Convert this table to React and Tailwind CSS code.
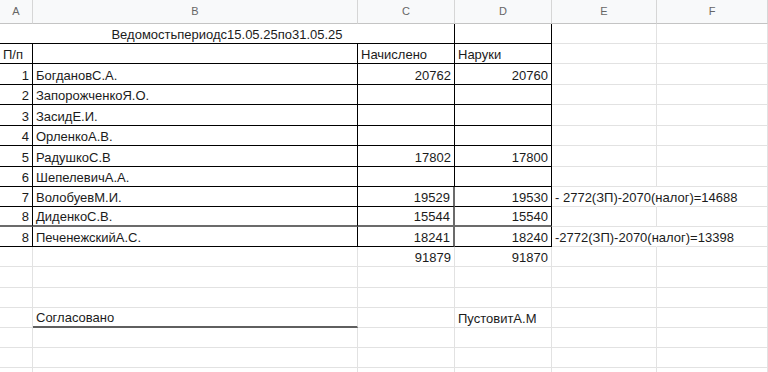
import React from "react";

const LIGHT = "light";
const DARK = "dark";
const GRAY = "gray";
const NONE = "none";

// right / bottom border classes, written out in full
const rightCls = {
  light: "border-r border-r-[#e2e2e2]",
  dark: "border-r border-r-black",
  gray: "border-r-2 border-r-[#6b6b6b]",
  none: "border-r border-r-transparent",
};
const bottomCls = {
  light: "border-b border-b-[#e2e2e2]",
  dark: "border-b border-b-black",
  gray: "border-b-2 border-b-[#6b6b6b]",
  soft: "border-b-2 border-b-[#5f5f5f]",
};

const alignCls = {
  l: "justify-start pl-[3px]",
  r: "justify-end pr-[3px]",
  c: "justify-center",
};

function Cell({ t = "", a = "l", r = LIGHT, b = LIGHT, span }) {
  return (
    <div
      className={[
        "flex items-end whitespace-nowrap leading-4 text-[13px] text-[#1b1b1b]",
        alignCls[a],
        rightCls[r],
        bottomCls[b],
        span === 3 ? "col-span-3" : "",
      ].join(" ")}
    >
      {t}
    </div>
  );
}

const people = [
  { n: "1", name: "БогдановС.А.", c: "20762", d: "20760" },
  { n: "2", name: "ЗапорожченкоЯ.О." },
  { n: "3", name: "ЗасидЕ.И." },
  { n: "4", name: "ОрленкоА.В." },
  { n: "5", name: "РадушкоС.В", c: "17802", d: "17800" },
  { n: "6", name: "ШепелевичА.А." },
  { n: "7", name: "ВолобуевМ.И.", c: "19529", d: "19530", note: "- 2772(ЗП)-2070(налог)=14688" },
  { n: "8", name: "ДиденкоС.В.", c: "15544", d: "15540" },
  { n: "8", name: "ПеченежскийА.С.", c: "18241", d: "18240", note: "-2772(ЗП)-2070(налог)=13398" },
];

export default function App() {
  const letters = ["A", "B", "C", "D", "E", "F"];

  return (
    <div
      className="h-[372px] w-[768px] overflow-hidden bg-white"
      style={{ fontFamily: '"Liberation Sans", Arial, sans-serif' }}
    >
      <div className="grid grid-cols-[33px_325px_97px_97px_105px_111px] grid-rows-[24px_20px_20px_21px_20px_21px_20px_21px_20px_20px_20px_20px_20px_21px_20px_20px_20px_20px_20px]">
        {/* column headers */}
        {letters.map((l) => (
          <div
            key={l}
            className="flex items-center justify-center border-b border-r border-b-[#c4c4c4] border-r-[#d6d6d6] bg-[#f8f9fa] text-[11px] text-[#666]"
          >
            {l}
          </div>
        ))}

        {/* title row */}
        <Cell span={3} t="Ведомостьпериодс15.05.25по31.05.25" a="c" r={DARK} b={DARK} />
        <Cell r={DARK} b={DARK} />
        <Cell />
        <Cell />

        {/* column captions */}
        <Cell t="П/п" r={DARK} b={DARK} />
        <Cell r={DARK} b={DARK} />
        <Cell t="Начислено" r={DARK} b={DARK} />
        <Cell t="Наруки" r={DARK} b={DARK} />
        <Cell />
        <Cell />

        {people.map((p, i) => {
          const bottom = i === 7 ? GRAY : DARK;
          const cRight = i >= 6 ? GRAY : DARK;
          return (
            <React.Fragment key={i}>
              <Cell t={p.n} a="r" r={DARK} b={bottom} />
              <Cell t={p.name} r={DARK} b={bottom} />
              <Cell t={p.c} a="r" r={cRight} b={bottom} />
              <Cell t={p.d} a="r" r={DARK} b={bottom} />
              <Cell t={p.note} r={p.note ? NONE : LIGHT} />
              <Cell />
            </React.Fragment>
          );
        })}

        {/* totals */}
        <Cell />
        <Cell />
        <Cell t="91879" a="r" />
        <Cell t="91870" a="r" />
        <Cell />
        <Cell />

        {/* two empty rows */}
        {[0, 1].map((k) => (
          <React.Fragment key={"e" + k}>
            <Cell />
            <Cell />
            <Cell />
            <Cell />
            <Cell />
            <Cell />
          </React.Fragment>
        ))}

        {/* signatures */}
        <Cell />
        <Cell t="Согласовано" b="soft" />
        <Cell />
        <Cell t="ПустовитА.М" />
        <Cell />
        <Cell />

        {[0, 1, 2].map((k) => (
          <React.Fragment key={"f" + k}>
            <Cell />
            <Cell />
            <Cell />
            <Cell />
            <Cell />
            <Cell />
          </React.Fragment>
        ))}
      </div>
    </div>
  );
}
